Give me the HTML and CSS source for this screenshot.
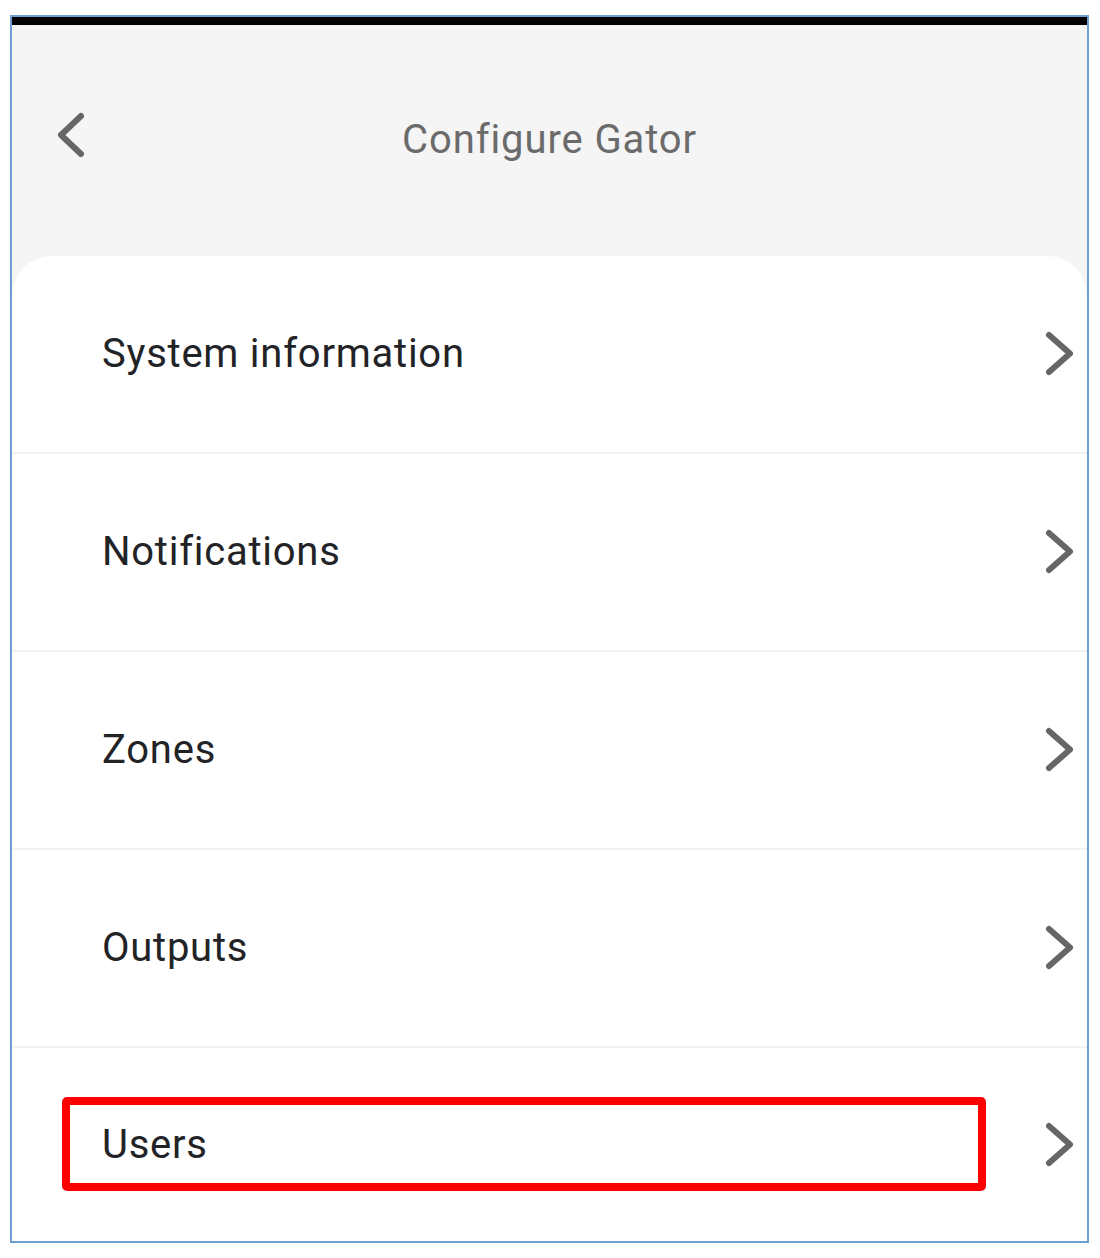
FILE: index.html
```
<!DOCTYPE html>
<html>
<head>
<meta charset="utf-8">
<link rel="stylesheet" href="styles.css">
</head>
<body>
<div class="frame">
  <div class="topbar"></div>
  <header class="header">
    <svg class="back" width="40" height="60" viewBox="0 0 40 60"><polyline points="33,9 13,28 33,47" fill="none" stroke="#666" stroke-width="6" stroke-linecap="round" stroke-linejoin="round"/></svg>
    <h1 class="title">Configure Gator</h1>
  </header>
  <ul class="list">
    <li class="row"><span class="label">System information</span><svg class="chev" width="40" height="60" viewBox="0 0 40 60"><polyline points="8,9 29,27.5 8,46" fill="none" stroke="#666" stroke-width="6" stroke-linecap="round" stroke-linejoin="round"/></svg></li>
    <li class="row"><span class="label">Notifications</span><svg class="chev" width="40" height="60" viewBox="0 0 40 60"><polyline points="8,9 29,27.5 8,46" fill="none" stroke="#666" stroke-width="6" stroke-linecap="round" stroke-linejoin="round"/></svg></li>
    <li class="row"><span class="label">Zones</span><svg class="chev" width="40" height="60" viewBox="0 0 40 60"><polyline points="8,9 29,27.5 8,46" fill="none" stroke="#666" stroke-width="6" stroke-linecap="round" stroke-linejoin="round"/></svg></li>
    <li class="row"><span class="label">Outputs</span><svg class="chev" width="40" height="60" viewBox="0 0 40 60"><polyline points="8,9 29,27.5 8,46" fill="none" stroke="#666" stroke-width="6" stroke-linecap="round" stroke-linejoin="round"/></svg></li>
    <li class="row last"><span class="label">Users</span><svg class="chev" width="40" height="60" viewBox="0 0 40 60"><polyline points="8,9 29,27.5 8,46" fill="none" stroke="#666" stroke-width="6" stroke-linecap="round" stroke-linejoin="round"/></svg><div class="highlight"></div></li>
  </ul>
</div>
</body>
</html>
```

FILE: styles.css
```
* { box-sizing: border-box; }
html, body { margin: 0; padding: 0; background: #fff; }
body { font-family: Roboto, "Noto Sans", Arial, sans-serif; }
.frame {
  margin: 15px 0 0 10px;
  width: 1079px;
  height: 1228px;
  border: 2px solid #6f9fd2;
  background: #f5f5f5;
  display: flex;
  flex-direction: column;
  overflow: hidden;
}
.topbar { height: 8px; background: #000; flex: none; }
.header {
  height: 231px;
  flex: none;
  position: relative;
  display: flex;
  align-items: center;
  justify-content: center;
}
.back { position: absolute; left: 36px; top: 82px; }
.title {
  margin: 0;
  font-weight: 400;
  font-size: 40px;
  letter-spacing: 0.9px;
  color: #6b6b6b;
  margin-top: -2px;
}
.list {
  list-style: none;
  margin: 0;
  padding: 0;
  background: #fff;
  border-radius: 40px 40px 0 0;
  flex: 1;
}
.row {
  height: 198px;
  border-bottom: 2px solid #f2f2f2;
  display: flex;
  align-items: center;
  padding-left: 90px;
  position: relative;
}
.row.last { border-bottom: none; height: 193px; }
.label {
  flex: 1;
  font-size: 40px;
  letter-spacing: 0.75px;
  color: #222326;
  margin-top: -1px;
}
.chev { margin-right: 6px; margin-top: 4px; }
.highlight {
  position: absolute;
  left: 50px;
  top: 49px;
  width: 924px;
  height: 94px;
  border: 8px solid #ff0000;
  border-radius: 5px;
}
```
